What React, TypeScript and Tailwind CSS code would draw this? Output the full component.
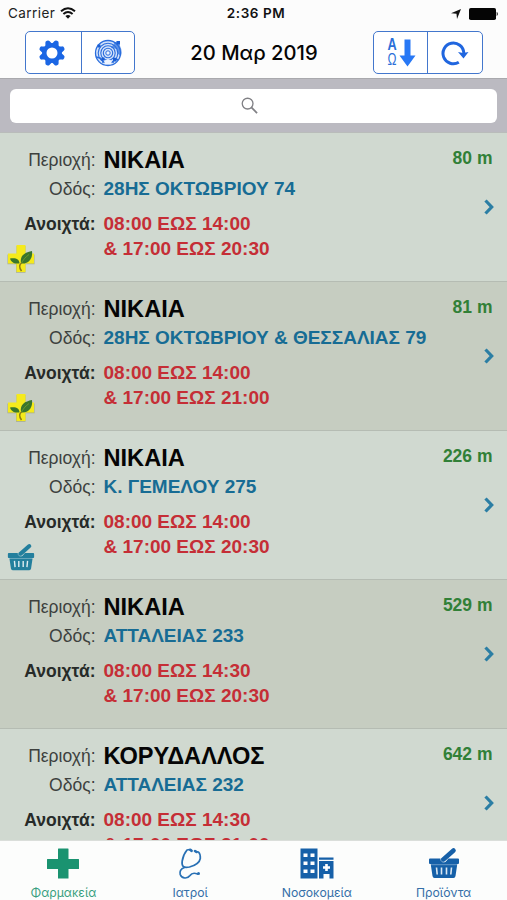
import React from "react";

type Badge = "plant" | "basket" | null;

interface Pharmacy {
  area: string;
  street: string;
  morning: string;
  evening: string;
  distance: string;
  badge: Badge;
}

const pharmacies: Pharmacy[] = [
  { area: "ΝΙΚΑΙΑ", street: "28ΗΣ ΟΚΤΩΒΡΙΟΥ 74", morning: "08:00 ΕΩΣ 14:00", evening: "& 17:00 ΕΩΣ 20:30", distance: "80 m", badge: "plant" },
  { area: "ΝΙΚΑΙΑ", street: "28ΗΣ ΟΚΤΩΒΡΙΟΥ & ΘΕΣΣΑΛΙΑΣ 79", morning: "08:00 ΕΩΣ 14:00", evening: "& 17:00 ΕΩΣ 21:00", distance: "81 m", badge: "plant" },
  { area: "ΝΙΚΑΙΑ", street: "Κ. ΓΕΜΕΛΟΥ 275", morning: "08:00 ΕΩΣ 14:00", evening: "& 17:00 ΕΩΣ 20:30", distance: "226 m", badge: "basket" },
  { area: "ΝΙΚΑΙΑ", street: "ΑΤΤΑΛΕΙΑΣ 233", morning: "08:00 ΕΩΣ 14:30", evening: "& 17:00 ΕΩΣ 20:30", distance: "529 m", badge: null },
  { area: "ΚΟΡΥΔΑΛΛΟΣ", street: "ΑΤΤΑΛΕΙΑΣ 232", morning: "08:00 ΕΩΣ 14:30", evening: "& 17:00 ΕΩΣ 21:00", distance: "642 m", badge: null },
];

function Basket({ className }: { className: string }) {
  return (
    <svg viewBox="0 0 32 32" className={className}>
      <path fill="currentColor" d="M2 11.500H12.500L13 14C14 15.800 17 15.700 18.500 13.700L20.500 11.500H30Q31 11.500 31 12.500V16Q31 17 30 17H29.300L27.500 29Q27.200 31 25.500 31H6.500Q4.800 31 4.500 29L2.700 17H2Q1 17 1 16V12.500Q1 11.500 2 11.500Z" />
      <path d="M14.800 13L25.500 3.500" stroke="currentColor" strokeWidth="4.600" strokeLinecap="round" />
      <path d="M8.500 20.500L9.200 27.500M13.500 20.500V27.500M18.500 20.500V27.500M23.500 20.500L22.800 27.500" stroke="white" strokeOpacity=".85" strokeWidth="1.600" />
      <path d="M2 17.700H30M12.500 11.500C12.500 15 16 16 18.500 13.500" stroke="white" strokeOpacity=".5" strokeWidth=".7" fill="none" />
    </svg>
  );
}

function PlantCross() {
  return (
    <svg viewBox="0 0 28 28" className="h-7 w-7">
      <path d="M9.500 1H18.500V9.500H27.500V19.300H18.500V27.800H9V19.300H.500V9.500H9.500Z" fill="#8e9668" opacity=".6" />
      <path d="M9.500 0H18.500V8.500H27V18.500H18.500V27H9.500V18.500H1V8.500H9.500Z" fill="#f5ea1c" />
      <path d="M14 18.500C12.500 10 18 7.500 25 6C26 13 22 19.500 14 18.500Z" fill="#39762c" />
      <path d="M12.500 18.500C6 19 4 16.500 3 13.500C8 12.500 12.500 13.500 12.500 18.500Z" fill="#39762c" />
      <path d="M14 19C16 15 18 12.500 22 9.500" stroke="#77a02c" strokeWidth=".8" fill="none" />
      <path d="M14.500 26C12 22.500 12.500 19.500 14.500 18" stroke="#8a7a16" strokeWidth="1.500" fill="none" />
    </svg>
  );
}

function Gear() {
  const teeth = [0, 45, 90, 135, 180, 225, 270, 315];
  return (
    <svg viewBox="-14 -14 28 28" className="h-7 w-7 text-[#1b66e4]">
      {teeth.map((a) => (
        <path key={a} transform={`rotate(${a + 22.5})`} d="M-4 -7.500L-2.200 -12Q-1.800 -13.300 0 -13.300Q1.800 -13.300 2.200 -12L4 -7.500Z" fill="currentColor" />
      ))}
      <circle r="7.700" fill="none" stroke="currentColor" strokeWidth="4.400" />
    </svg>
  );
}

function Radar() {
  return (
    <svg viewBox="-14 -14 28 28" className="h-7 w-7" fill="none" stroke="#2a6ddd">
      <circle r="12.500" strokeWidth="1.300" fill="#d3e2fa" />
      <circle r="9.800" strokeWidth="1.100" />
      <circle r="7.200" strokeWidth="1.100" />
      <circle r="4.700" strokeWidth="1.100" />
      <path d="M3 -5L7 -11L11 -11.500L12 -7A13 13 0 0 1 13 3L10 1L9 -4Z" fill="#2a6ddd" fillOpacity=".7" stroke="none" />
      <path d="M-12 4L-8 5L-5 8M6 5L10 7M-6 9L6 9" strokeWidth="1.600" />
      <circle r="2.200" fill="#eef4ff" strokeWidth="1" />
      <path d="M-4 8L0 6L4 8L3 11H-3Z" fill="#eef4ff" stroke="none" />
      <path d="M-10.500 -8.500h3v3h-3zM-6.500 4.500h3v3h-3zM5 5h3.500v3.500h-3.500zM8.500 -12h3.500v3.500h-3.500z" fill="#1b5fd4" stroke="none" />
    </svg>
  );
}

function StatusBar() {
  return (
    <div className="grid h-[27px] grid-cols-3 items-center px-2 font-['Inter',sans-serif] text-[13.5px] leading-[27px] text-[#222]">
      <div className="flex items-center gap-[5px]">
        <span className="tracking-[0.42px]">Carrier</span>
        <svg viewBox="0 0 16 12" className="mb-0.5 h-3 w-4" fill="none" stroke="#111" strokeWidth="2">
          <path d="M1 4.300Q8 -1.800 15 4.300M3.400 7Q8 3 12.600 7" />
          <path d="M8 11.700L5.400 9Q8 7 10.600 9Z" fill="#111" stroke="none" />
        </svg>
      </div>
      <div className="whitespace-nowrap pl-[5px] text-center font-semibold tracking-[0.55px] text-[#111]">2:36 PM</div>
      <div className="flex items-center justify-end gap-[7px]">
        <svg viewBox="0 0 10 10" className="h-[10px] w-[10px]"><path d="M10 0L6 10L5.500 4.800L0 4.200Z" fill="#111" /></svg>
        <svg viewBox="0 0 31 12" className="mr-[0.5px] h-3 w-[31px]">
          <rect x="1" width="27" height="12" rx="1.800" fill="#050505" />
          <path d="M28.700 3.800Q31 6 28.700 8.200Z" fill="#111" />
        </svg>
      </div>
    </div>
  );
}

function NavBar() {
  return (
    <div className="flex h-[51px] items-start justify-between pl-[25px] pr-6 pt-[4px]">
      <div className="flex h-[43px] w-[110px] divide-x divide-[#4377cd] rounded-[5px] border border-[#4377cd] bg-white">
        <button className="flex flex-1 items-center justify-center pr-[2px]"><Gear /></button>
        <button className="flex flex-1 items-center justify-center"><Radar /></button>
      </div>
      <h1 className="pt-[8px] font-['Inter',sans-serif] text-[20.2px] font-medium leading-[28px] text-[#050505]">20 Μαρ 2019</h1>
      <div className="flex h-[43px] w-[110px] divide-x divide-[#4377cd] rounded-[5px] border border-[#4377cd] bg-white">
        <button className="flex w-[53.5px] items-center justify-center">
          <span className="flex w-[15px] flex-col items-center font-['Liberation_Sans',sans-serif] text-[#2b6fd8]">
            <span className="scale-x-75 text-[17px] font-bold leading-[14px]">Α</span>
            <span className="scale-x-75 text-[16px] leading-[15px]">Ω</span>
          </span>
          <svg viewBox="0 0 17 28" className="h-7 w-[17px]"><path d="M5.500 .500H11.500V16.500H16.500L8.500 27.500L.500 16.500H5.500Z" fill="#2878f5" /></svg>
        </button>
        <button className="flex flex-1 items-center justify-center">
          <svg viewBox="0 0 28 26" className="h-[26px] w-7">
            <path d="M17.800 22.300A10.400 10.400 0 1 1 22.800 13" fill="none" stroke="#2066df" strokeWidth="3" />
            <path d="M17 12L22 13L27.500 12L22.500 18.500Z" fill="#2066df" />
          </svg>
        </button>
      </div>
    </div>
  );
}

function SearchBar() {
  return (
    <div className="h-[55px] border-b border-t border-b-[#b9bcba] border-t-[#a9a9ad] bg-[#bbbac1] px-[10px] pt-[9.5px]">
      <div className="flex h-[34px] items-center justify-center rounded-[6px] bg-white pr-[9px]">
        <svg viewBox="0 0 18 18" className="h-[17px] w-[17px]" fill="none" stroke="#808085" strokeWidth="1.400">
          <circle cx="7" cy="7" r="5.700" />
          <path d="M11 11L17 17" strokeWidth="1.900" />
        </svg>
      </div>
    </div>
  );
}

function PharmacyRow({ item, dark }: { item: Pharmacy; dark: boolean }) {
  return (
    <li className={`relative flex h-[149px] shrink-0 border-b border-[#b5bcb3] font-['Liberation_Sans',sans-serif] ${dark ? "bg-[#c6cdc1]" : "bg-[#d0d9d0]"}`}>
      <div className="w-[95.5px] whitespace-nowrap text-right text-[17.5px] text-[#3d413e]">
        <div className="pt-[14.500px] leading-[24px]">Περιοχή:</div>
        <div className="pt-[5px] leading-[24px]">Οδός:</div>
        <div className="pt-[11px] font-bold leading-[24px] text-[#272b29]">Ανοιχτά:</div>
      </div>
      <div className="flex-1 whitespace-nowrap pl-[8px] text-[19px] font-bold">
        <div className="pt-[12.500px] text-[23.6px] leading-[28px] text-[#050505]">{item.area}</div>
        <div className="pt-[3px] leading-[24px] text-[#176c94]">{item.street}</div>
        <div className="pt-[11px] leading-[24px] text-[#c52e36]">{item.morning}</div>
        <div className="leading-[25px] text-[#c52e36]">{item.evening}</div>
      </div>
      <div className="absolute right-[14.500px] top-[13px] text-[17.5px] font-bold leading-[24px] text-[#318037]">{item.distance}</div>
      <svg viewBox="0 0 10 16" className="absolute right-[13px] top-[65.500px] h-4 w-[10px]">
        <path d="M1.500 1.500L7.700 8L1.500 14.500" fill="none" stroke="#2b7ea4" strokeWidth="3.200" />
      </svg>
      {item.badge && (
        <div className="absolute bottom-[8.500px] left-[6.500px]">
          {item.badge === "plant" ? <PlantCross /> : <Basket className="h-7 w-7 text-[#237f9d]" />}
        </div>
      )}
    </li>
  );
}

function TabBar() {
  return (
    <nav className="grid h-[60px] shrink-0 grid-cols-4 border-t border-[#dadeda] bg-[#fcfdfc] font-['Inter',sans-serif] text-[12.2px] text-[#356fa8]">
      <div className="flex flex-col items-center pt-[7px] text-[#3aa080]">
        <svg viewBox="0 0 32 32" className="h-8 w-8"><path d="M11 1Q11 .500 11.500 .500H21Q21.500 .500 21.500 1V11H31.500Q32 11 32 11.500V20.500Q32 21 31.500 21H21.500V30.500H11V21H.500Q0 21 0 20.500V11.500Q0 11 .500 11H11Z" fill="#1a9370" /></svg>
        <span className="pt-[4px] leading-[18px]">Φαρμακεία</span>
      </div>
      <div className="flex flex-col items-center pt-[7px]">
        <svg viewBox="0 0 24 32" className="h-8 w-6" fill="none" stroke="#2870b4" strokeWidth="1.700" strokeLinecap="round" strokeLinejoin="round">
          <path d="M13.500 2.800L11.500 1.500L9 2C6.500 5 4.800 9 4.200 13C3.500 18 5 20.500 11.500 19C17 17.500 21.500 15 22.300 10.500C22.500 7.500 21.500 5 20.500 4L17.500 3.500" />
          <path d="M6.500 19.500C2.500 20.500 1.500 24 2.200 26.500C4 31 9.500 31 12 27.500C14 24.500 17 25 19.500 26" />
          <circle cx="20.500" cy="25.500" r="1.500" fill="#2870b4" stroke="none" />
          <path d="M12.300 1.800L13.500 2.800M17 3L18.500 4" strokeWidth="2.600" />
        </svg>
        <span className="pt-[4px] leading-[18px]">Ιατροί</span>
      </div>
      <div className="flex flex-col items-center pt-[7px]">
        <svg viewBox="0 0 34 32" className="h-8 w-[34px]">
          <path d="M.500 .500H17.500V30.500H.500Z" fill="#1660a8" />
          <path d="M3.500 5.500H7.500V9H3.500ZM10.500 5.500H14.500V9H10.500ZM3.500 13.500H7.500V17H3.500ZM10.500 13.500H14.500V17H10.500ZM3.500 21.500H7.500V25H3.500ZM10.500 21.500H14.500V25H10.500Z" fill="#fff" />
          <path d="M19 9.500H33.500V11.800H19ZM19 13H33.500V30.500H29.500V26H23.500V30.500H19Z" fill="#1660a8" />
          <path d="M25.200 16H27.800V18.200H30V20.800H27.800V23H25.200V20.800H23V18.200H25.200Z" fill="#fff" />
        </svg>
        <span className="pt-[4px] leading-[18px]">Νοσοκομεία</span>
      </div>
      <div className="flex flex-col items-center pt-[7px]">
        <Basket className="-mt-[1px] mb-[1px] h-8 w-8 text-[#1660a8]" />
        <span className="pt-[4px] leading-[18px]">Προϊόντα</span>
      </div>
    </nav>
  );
}

export default function App() {
  return (
    <div className="flex h-[900px] w-[507px] flex-col overflow-hidden bg-[#fcfcfc]">
      <header className="shrink-0">
        <StatusBar />
        <NavBar />
        <SearchBar />
      </header>
      <ul className="flex min-h-0 flex-1 flex-col overflow-hidden">
        {pharmacies.map((item, i) => (
          <PharmacyRow key={i} item={item} dark={i % 2 === 1} />
        ))}
      </ul>
      <TabBar />
    </div>
  );
}
